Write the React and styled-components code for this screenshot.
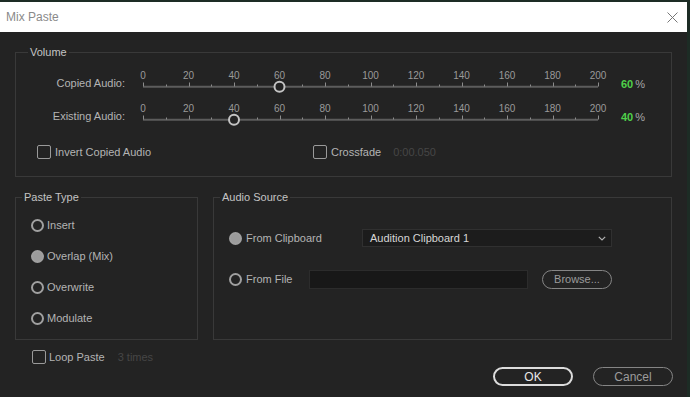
import React from "react";
import styled, { createGlobalStyle } from "styled-components";

const GlobalStyle = createGlobalStyle`
  html, body { margin: 0; padding: 0; background: #1d2c25; }
  body { font-family: "Liberation Sans", Arial, sans-serif; }
  * { box-sizing: border-box; }
`;

const Window = styled.div`
  width: 687px;
  height: 395px;
  margin-top: 2px;
  display: flex;
  flex-direction: column;
`;

const TitleBar = styled.div`
  height: 30px;
  background: #ffffff;
  display: flex;
  align-items: center;
  justify-content: space-between;
  padding: 0 9px 0 6px;
`;

const Title = styled.span`
  font-size: 12px;
  color: #8a8a8a;
`;

const Body = styled.div`
  flex: 1;
  background: #232323;
  padding: 13px 15px 0;
  display: flex;
  flex-direction: column;
`;

const Group = styled.fieldset`
  margin: 0;
  padding: 0;
  border: 1px solid #393939;
  min-width: 0;
  width: ${(p) => (p.$w ? `${p.$w}px` : "auto")};
  flex: ${(p) => (p.$w ? "none" : "1")};
`;

const Legend = styled.legend`
  margin-left: ${(p) => p.$offset}px;
  padding: 0 2px;
  font-size: 11px;
  line-height: 14px;
  color: #c4c4c4;
`;

const VolumeContent = styled.div`
  padding: 11px 0 17px;
  display: flex;
  flex-direction: column;
  gap: 9px;
`;

const SliderRow = styled.div`
  display: grid;
  grid-template-columns: 109px 455px auto;
  column-gap: 18px;
  align-items: center;
  height: 24px;
`;

const RowLabel = styled.span`
  text-align: right;
  font-size: 11px;
  color: #b4b4b4;
  padding-top: 2px;
`;

const SliderBox = styled.div`
  display: flex;
  flex-direction: column;
  height: 24px;
`;

const NumberRow = styled.div`
  position: relative;
  height: 11px;
`;

const ScaleNum = styled.span`
  position: absolute;
  top: 0;
  transform: translateX(-50%);
  font-size: 10px;
  line-height: 11px;
  color: #9a9a9a;
`;

const TrackSvg = styled.svg`
  display: block;
  overflow: visible;
`;

const Percent = styled.span`
  margin-left: 5px;
  padding-top: 3px;
  font-size: 11px;
  color: #a8a8a8;
  display: flex;
  gap: 2px;
`;

const PercentValue = styled.span`
  color: #4fd14a;
  font-weight: bold;
`;

const CheckRow = styled.div`
  display: flex;
  align-items: center;
  height: 14px;
  margin-top: 9px;
  padding-left: ${(p) => p.$pad || 0}px;
`;

const CheckItem = styled.label`
  display: flex;
  align-items: center;
  gap: ${(p) => (p.$gap != null ? p.$gap : 4)}px;
  width: ${(p) => (p.$w ? `${p.$w}px` : "auto")};
  font-size: 11px;
  color: #b4b4b4;
`;

const Box = styled.span`
  width: 14px;
  height: 14px;
  border: 1.5px solid #9a9a9a;
  border-radius: 2px;
  flex: none;
`;

const Hint = styled.span`
  margin-left: ${(p) => p.$ml || 12}px;
  font-size: 11px;
  color: #464646;
`;

const BottomRow = styled.div`
  display: flex;
  gap: 15px;
  margin-top: 13px;
`;

const RadioList = styled.div`
  display: flex;
  flex-direction: column;
  gap: 11px;
  padding: 11px 0 11px 15px;
`;

const RadioItem = styled.label`
  display: flex;
  align-items: center;
  gap: ${(p) => (p.$gap != null ? p.$gap : 3)}px;
  height: 20px;
  width: ${(p) => (p.$w ? `${p.$w}px` : "auto")};
  flex: none;
  font-size: 11px;
  color: #b4b4b4;
`;

const Radio = styled.span`
  width: 13px;
  height: 13px;
  border-radius: 50%;
  border: 2px solid #a0a0a0;
  background: ${(p) => (p.$on ? "#9c9c9c" : "transparent")};
  flex: none;
`;

const SourceContent = styled.div`
  display: flex;
  flex-direction: column;
  gap: 21px;
  padding: 24px 0 0 15px;
`;

const SourceRow = styled.div`
  display: flex;
  align-items: center;
  height: 20px;
`;

const Select = styled.div`
  width: 250px;
  height: 18px;
  background: #1c1c1c;
  border: 1px solid #303030;
  display: flex;
  align-items: center;
  justify-content: space-between;
  padding: 0 5px 0 7px;
  font-size: 11px;
  color: #d6d6d6;
`;

const FileInput = styled.div`
  width: 219px;
  height: 19px;
  background: #181818;
  border: 1px solid #2c2c2c;
`;

const PillButton = styled.button`
  width: ${(p) => p.$w}px;
  height: 19px;
  margin-left: ${(p) => p.$ml || 0}px;
  border-radius: 10px;
  background: transparent;
  border: ${(p) => (p.$primary ? "2px solid #dcdcdc" : "1.5px solid #858585")};
  color: ${(p) => (p.$primary ? "#e8e8e8" : "#9c9c9c")};
  font-family: inherit;
  font-size: ${(p) => p.$fs || 12}px;
  padding: 0;
  display: flex;
  align-items: center;
  justify-content: center;
`;

const Footer = styled.div`
  flex: 1;
  display: flex;
  justify-content: space-between;
`;

const LoopRow = styled.div`
  align-self: flex-start;
  margin-top: 10px;
  padding-left: 17px;
  display: flex;
  align-items: center;
  height: 14px;
`;

const Actions = styled.div`
  align-self: flex-end;
  margin-bottom: 11px;
  margin-right: -1px;
  display: flex;
  gap: 20px;
`;

const TRACK = 455;

function Slider({ value }) {
  const nums = Array.from({ length: 11 }, (_, i) => i * 20);
  const ticks = Array.from({ length: 21 }, (_, i) => i);
  const tx = (value / 200) * TRACK;
  return (
    <SliderBox>
      <NumberRow>
        {nums.map((n) => (
          <ScaleNum key={n} style={{ left: `${(n / 200) * 100}%` }}>
            {n}
          </ScaleNum>
        ))}
      </NumberRow>
      <TrackSvg width={TRACK} height={13} viewBox={`0 0 ${TRACK} 13`}>
        <line x1={0} y1={5.7} x2={TRACK} y2={5.7} stroke="#5c5c5c" strokeWidth={2} />
        {ticks.map((i) => {
          const x = Math.round((i / 20) * TRACK) + 0.5;
          const major = i % 2 === 0;
          return (
            <line
              key={i}
              x1={x}
              x2={x}
              y1={major ? 1.5 : 3.5}
              y2={5.5}
              stroke="#8c8c8c"
              strokeWidth={1}
            />
          );
        })}
        <circle cx={tx} cy={5.7} r={5} fill="#232323" stroke="#c4c4c4" strokeWidth={2} />
      </TrackSvg>
    </SliderBox>
  );
}

function CloseIcon() {
  return (
    <svg width="11" height="11" viewBox="0 0 11 11">
      <path d="M0.5 0.5 L10.5 10.5 M10.5 0.5 L0.5 10.5" stroke="#777" strokeWidth="1" fill="none" />
    </svg>
  );
}

function Chevron() {
  return (
    <svg width="8" height="5" viewBox="0 0 8 5">
      <path d="M0.8 0.8 L4 4 L7.2 0.8" stroke="#b0b0b0" strokeWidth="1.2" fill="none" />
    </svg>
  );
}

export default function App() {
  return (
    <>
      <GlobalStyle />
      <Window>
        <TitleBar>
          <Title>Mix Paste</Title>
          <CloseIcon />
        </TitleBar>
        <Body>
          <Group>
            <Legend $offset={12}>Volume</Legend>
            <VolumeContent>
              <SliderRow>
                <RowLabel>Copied Audio:</RowLabel>
                <Slider value={60} />
                <Percent>
                  <PercentValue>60</PercentValue>%
                </Percent>
              </SliderRow>
              <SliderRow>
                <RowLabel>Existing Audio:</RowLabel>
                <Slider value={40} />
                <Percent>
                  <PercentValue>40</PercentValue>%
                </Percent>
              </SliderRow>
              <CheckRow $pad={21}>
                <CheckItem $w={276}>
                  <Box />
                  Invert Copied Audio
                </CheckItem>
                <CheckItem>
                  <Box />
                  Crossfade
                </CheckItem>
                <Hint>0:00.050</Hint>
              </CheckRow>
            </VolumeContent>
          </Group>
          <BottomRow>
            <Group $w={183}>
              <Legend $offset={6}>Paste Type</Legend>
              <RadioList>
                <RadioItem>
                  <Radio />
                  Insert
                </RadioItem>
                <RadioItem>
                  <Radio $on />
                  Overlap (Mix)
                </RadioItem>
                <RadioItem>
                  <Radio />
                  Overwrite
                </RadioItem>
                <RadioItem>
                  <Radio />
                  Modulate
                </RadioItem>
              </RadioList>
            </Group>
            <Group>
              <Legend $offset={6}>Audio Source</Legend>
              <SourceContent>
                <SourceRow>
                  <RadioItem $w={133} $gap={4}>
                    <Radio $on />
                    From Clipboard
                  </RadioItem>
                  <Select>
                    Audition Clipboard 1
                    <Chevron />
                  </Select>
                </SourceRow>
                <SourceRow>
                  <RadioItem $w={80} $gap={4}>
                    <Radio />
                    From File
                  </RadioItem>
                  <FileInput />
                  <PillButton $w={70} $ml={14} $fs={11}>
                    Browse...
                  </PillButton>
                </SourceRow>
              </SourceContent>
            </Group>
          </BottomRow>
          <Footer>
            <LoopRow>
              <CheckItem $gap={3}>
                <Box />
                Loop Paste
              </CheckItem>
              <Hint $ml={13}>3 times</Hint>
            </LoopRow>
            <Actions>
              <PillButton $w={80} $primary>
                OK
              </PillButton>
              <PillButton $w={80}>Cancel</PillButton>
            </Actions>
          </Footer>
        </Body>
      </Window>
    </>
  );
}
